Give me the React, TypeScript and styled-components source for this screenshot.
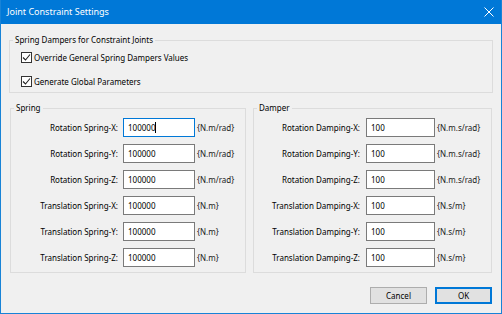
import React from "react";
import styled, { createGlobalStyle } from "styled-components";

const GlobalStyle = createGlobalStyle`
  html, body {
    margin: 0;
    padding: 0;
    background: #ffffff;
  }

  body {
    font-family: "Noto Sans", "Open Sans", sans-serif;
    font-size: 8px;
    color: #000000;
  }
`;

const Window = styled.div`
  width: 502px;
  height: 314px;
  box-sizing: border-box;
  border: 1px solid #1883d7;
  border-top: none;
  background: #f0f0f0;
  display: flex;
  flex-direction: column;
`;

const TitleBar = styled.div`
  height: 24px;
  flex: none;
  display: flex;
  align-items: center;
  justify-content: space-between;
  padding: 0 6px 0 6px;
  background: #0078d7;
  color: #ffffff;
`;

const Title = styled.span`
  font-size: 9px;
  line-height: 12px;
`;

const CloseButton = styled.div`
  width: 12px;
  height: 12px;
  display: flex;
  align-items: center;
  justify-content: center;
`;

const Content = styled.div`
  flex: 1;
  display: flex;
  flex-direction: column;
  padding: 10px 8px 9px 8px;
`;

const Group = styled.fieldset`
  margin: 0;
  padding: 0;
  min-width: 0;
  border: 1px solid #dcdcdc;
`;

const Legend = styled.legend`
  margin-left: 3px;
  padding: 0 2px;
  line-height: 12px;
  font-size: 8px;
`;

const OptionsBody = styled.div`
  display: flex;
  flex-direction: column;
  gap: 6px;
  padding: 2px 0 2px 11px;
`;

const CheckRow = styled.label`
  height: 18px;
  display: flex;
  align-items: center;
  gap: 2px;
`;

const CheckBox = styled.span`
  width: 11px;
  height: 11px;
  box-sizing: border-box;
  border: 1px solid #333333;
  background: #ffffff;
  display: flex;
  align-items: center;
  justify-content: center;
`;

const Columns = styled.div`
  display: flex;
  gap: 7px;
  margin: 9px 1px 0 1px;
`;

const SideGroup = styled(Group)<{ $width: number }>`
  width: ${(p) => p.$width}px;
  box-sizing: border-box;
  flex: none;
`;

const FieldGrid = styled.div<{ $inputWidth: number }>`
  display: grid;
  grid-template-columns: 112px ${(p) => p.$inputWidth}px auto;
  row-gap: 7px;
  padding: 4px 0 5px 0;
`;

const FieldLabel = styled.span<{ $gap: number }>`
  height: 19px;
  display: flex;
  align-items: center;
  justify-content: flex-end;
  padding-right: ${(p) => p.$gap}px;
  white-space: nowrap;
`;

const TextBox = styled.div<{ $active?: boolean }>`
  height: 19px;
  box-sizing: border-box;
  border: 1px solid ${(p) => (p.$active ? "#0078d7" : "#7a7a7a")};
  background: #ffffff;
  display: flex;
  align-items: center;
  padding-left: 4px;
`;

const Caret = styled.span`
  width: 1px;
  height: 11px;
  background: #000000;
`;

const Unit = styled.span`
  height: 19px;
  display: flex;
  align-items: center;
  padding-left: 2px;
  white-space: nowrap;
  color: #1a1a1a;
`;

const ButtonRow = styled.div`
  display: flex;
  justify-content: flex-end;
  gap: 8px;
  margin: 14px 1px 0 0;
`;

const Button = styled.button<{ $default?: boolean }>`
  width: 57px;
  height: 17px;
  box-sizing: border-box;
  padding: 0;
  font-family: inherit;
  font-size: 8px;
  color: #000000;
  background: #e1e1e1;
  border: 1px solid ${(p) => (p.$default ? "#0078d7" : "#adadad")};
  box-shadow: ${(p) => (p.$default ? "inset 0 0 0 1px #0078d7" : "none")};
`;

interface Field {
  label: string;
  value: string;
  unit: string;
  active?: boolean;
}

const springFields: Field[] = [
  { label: "Rotation Spring-X:", value: "100000", unit: "{N.m/rad}", active: true },
  { label: "Rotation Spring-Y:", value: "100000", unit: "{N.m/rad}" },
  { label: "Rotation Spring-Z:", value: "100000", unit: "{N.m/rad}" },
  { label: "Translation Spring-X:", value: "100000", unit: "{N.m}" },
  { label: "Translation Spring-Y:", value: "100000", unit: "{N.m}" },
  { label: "Translation Spring-Z:", value: "100000", unit: "{N.m}" }
];

const damperFields: Field[] = [
  { label: "Rotation Damping-X:", value: "100", unit: "{N.m.s/rad}" },
  { label: "Rotation Damping-Y:", value: "100", unit: "{N.m.s/rad}" },
  { label: "Rotation Damping-Z:", value: "100", unit: "{N.m.s/rad}" },
  { label: "Translation Damping-X:", value: "100", unit: "{N.s/m}" },
  { label: "Translation Damping-Y:", value: "100", unit: "{N.s/m}" },
  { label: "Translation Damping-Z:", value: "100", unit: "{N.s/m}" }
];

const CheckMark = () => (
  <svg width="9" height="9" viewBox="0 0 9 9">
    <path d="M1 4.5 L3.5 7 L8 1.5" fill="none" stroke="#222" strokeWidth="1.1" />
  </svg>
);

const CloseIcon = () => (
  <svg width="10" height="10" viewBox="0 0 10 10">
    <path d="M0.5 0.5 L9.5 9.5 M9.5 0.5 L0.5 9.5" stroke="#fff" strokeWidth="1" />
  </svg>
);

interface FieldGroupProps {
  title: string;
  width: number;
  inputWidth: number;
  labelGap: number;
  fields: Field[];
}

const FieldGroup = ({ title, width, inputWidth, labelGap, fields }: FieldGroupProps) => (
  <SideGroup $width={width}>
    <Legend>{title}</Legend>
    <FieldGrid $inputWidth={inputWidth}>
      {fields.map((f) => (
        <React.Fragment key={f.label}>
          <FieldLabel $gap={labelGap}>{f.label}</FieldLabel>
          <TextBox $active={f.active}>
            {f.value}
            {f.active && <Caret />}
          </TextBox>
          <Unit>{f.unit}</Unit>
        </React.Fragment>
      ))}
    </FieldGrid>
  </SideGroup>
);

export default function App() {
  return (
    <>
      <GlobalStyle />
      <Window>
        <TitleBar>
          <Title>Joint Constraint Settings</Title>
          <CloseButton>
            <CloseIcon />
          </CloseButton>
        </TitleBar>

        <Content>
          <Group>
            <Legend>Spring Dampers for Constraint Joints</Legend>
            <OptionsBody>
              <CheckRow>
                <CheckBox><CheckMark /></CheckBox>
                Override General Spring Dampers Values
              </CheckRow>
              <CheckRow>
                <CheckBox><CheckMark /></CheckBox>
                Generate Global Parameters
              </CheckRow>
            </OptionsBody>
          </Group>

          <Columns>
            <FieldGroup title="Spring" width={236} inputWidth={72} labelGap={5} fields={springFields} />
            <FieldGroup title="Damper" width={239} inputWidth={69} labelGap={6} fields={damperFields} />
          </Columns>

          <ButtonRow>
            <Button>Cancel</Button>
            <Button $default>OK</Button>
          </ButtonRow>
        </Content>
      </Window>
    </>
  );
}
